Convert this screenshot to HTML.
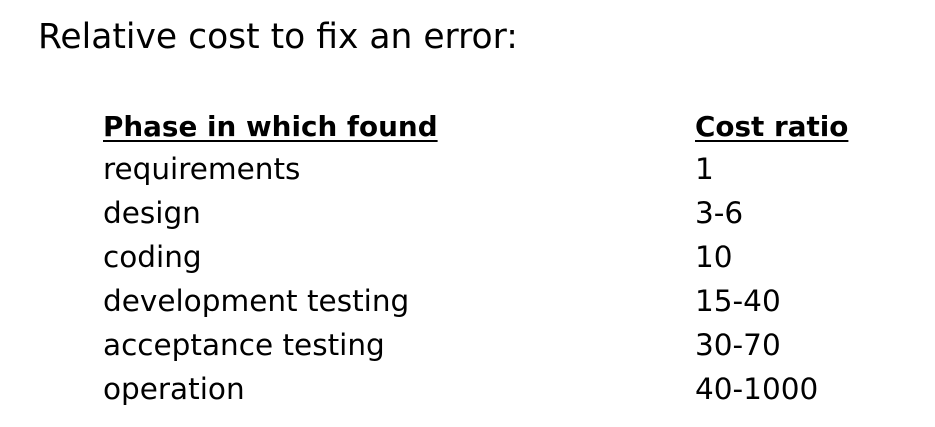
<!DOCTYPE html>
<html><head><meta charset="utf-8"><style>
html,body{margin:0;padding:0;background:#fff;}
body{width:935px;height:427px;position:relative;overflow:hidden;font-family:"DejaVu Sans","Liberation Sans",sans-serif;color:#000;}
.t{position:absolute;left:38px;top:17px;font-size:34.5px;white-space:nowrap;line-height:40px;}
.r{position:absolute;font-size:29.5px;white-space:nowrap;line-height:30px;}
.h{font-size:27.8px;font-weight:bold;text-decoration:underline;text-decoration-thickness:2px;text-underline-offset:4px;}
</style></head><body>
<div class="t">Relative cost to fix an error:</div>
<div class="r h" style="left:103px;top:112px">Phase in which found</div>
<div class="r h" style="left:695px;top:112px">Cost ratio</div>
<div class="r" style="left:103px;top:154px">requirements</div>
<div class="r" style="left:695px;top:154px">1</div>
<div class="r" style="left:103px;top:198px">design</div>
<div class="r" style="left:695px;top:198px">3-6</div>
<div class="r" style="left:103px;top:242px">coding</div>
<div class="r" style="left:695px;top:242px">10</div>
<div class="r" style="left:103px;top:286px">development testing</div>
<div class="r" style="left:695px;top:286px">15-40</div>
<div class="r" style="left:103px;top:330px">acceptance testing</div>
<div class="r" style="left:695px;top:330px">30-70</div>
<div class="r" style="left:103px;top:374px">operation</div>
<div class="r" style="left:695px;top:374px">40-1000</div>
</body></html>
